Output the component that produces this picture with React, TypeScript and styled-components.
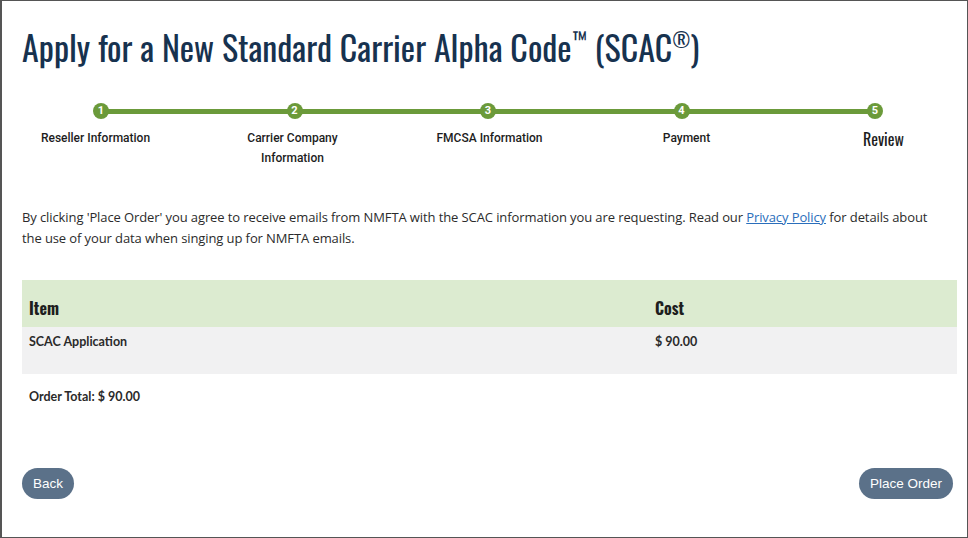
import React from "react";
import styled, { createGlobalStyle } from "styled-components";

const Global = createGlobalStyle`
  html, body { margin: 0; padding: 0; background: #fff; }
  * { box-sizing: border-box; }
`;

const condensed = `"Oswald", "Liberation Sans Narrow", "DejaVu Sans Condensed", sans-serif`;

const Frame = styled.div`
  width: 968px;
  height: 538px;
  border: 1px solid #555;
  border-left-width: 2px;
  background: #fff;
  padding: 0 10px 0 20px;
  display: flex;
  flex-direction: column;
  overflow: hidden;
`;

const Title = styled.h1`
  margin: 24px 0 0 0;
  font-family: ${condensed};
  font-weight: 400;
  font-size: 34px;
  line-height: 44px;
  color: #17324f;
  sup {
    font-size: 0.6em;
    vertical-align: 0.7em;
    line-height: 0;
  }
`;

const Stepper = styled.div`
  display: flex;
  flex-direction: column;
`;

const DotRow = styled.div`
  position: relative;
  margin: 34px 0 0 71px;
  width: 790px;
  display: flex;
  justify-content: space-between;
  &::before {
    content: "";
    position: absolute;
    left: 8px;
    right: 8px;
    top: 6px;
    height: 5px;
    background: #6b9a3a;
  }
`;

const Dot = styled.div`
  position: relative;
  width: 16px;
  height: 16px;
  border-radius: 50%;
  background: #6b9a3a;
  color: #fff;
  font-family: "Roboto", sans-serif;
  font-weight: 700;
  font-size: 11px;
  line-height: 16px;
  text-align: center;
`;

const LabelRow = styled.div`
  margin: 9px 0 0 -25px;
  display: grid;
  grid-template-columns: repeat(5, 197px);
`;

const StepLabel = styled.div<{ $active?: boolean }>`
  justify-self: center;
  width: 130px;
  margin-top: ${(p) => (p.$active ? "-1px" : "0")};
  text-align: center;
  font-family: ${(p) => (p.$active ? condensed : `"Roboto", sans-serif`)};
  font-weight: ${(p) => (p.$active ? 400 : 500)};
  font-size: ${(p) => (p.$active ? "16px" : "12px")};
  line-height: ${(p) => (p.$active ? "24px" : "20px")};
  color: #1d1d1d;
`;

const Notice = styled.p`
  margin: 39px 0 0 0;
  max-width: 912px;
  font-family: "Open Sans", "Noto Sans", sans-serif;
  font-size: 13px;
  letter-spacing: -0.1px;
  line-height: 21px;
  color: #2b2b2b;
  a {
    color: #2a6ebb;
    text-decoration: underline;
  }
`;

const Table = styled.div`
  margin-top: 31px;
  width: 935px;
  display: grid;
  grid-template-columns: 626px 1fr;
`;

const HeadCell = styled.div`
  background: #dcebd0;
  height: 47px;
  padding: 17px 7px 0;
  font-family: ${condensed};
  font-weight: 700;
  font-size: 16px;
  line-height: 22px;
  color: #1e1e1e;
`;

const BodyCell = styled.div`
  background: #f1f1f2;
  height: 47px;
  padding: 7px 7px 0;
  font-family: "Lato", "Open Sans", sans-serif;
  font-weight: 700;
  font-size: 12.5px;
  line-height: 16px;
  color: #2a2a2a;
`;

const Total = styled.div`
  margin: 15px 0 0 7px;
  font-family: "Lato", "Open Sans", sans-serif;
  font-weight: 700;
  font-size: 12.5px;
  line-height: 16px;
  color: #2a2a2a;
`;

const Actions = styled.div`
  margin-top: 63px;
  display: flex;
  justify-content: space-between;
  width: 931px;
`;

const Pill = styled.button`
  height: 31px;
  padding: 0 11px;
  border: none;
  border-radius: 16px;
  background: #5b7189;
  color: #fff;
  font-family: "Liberation Sans", Arial, sans-serif;
  font-size: 13.5px;
  cursor: pointer;
`;

const steps = [
  "Reseller Information",
  "Carrier Company Information",
  "FMCSA Information",
  "Payment",
  "Review",
];

export default function App() {
  return (
    <>
      <Global />
      <Frame>
        <Title>
          Apply for a New Standard Carrier Alpha Code<sup>™</sup> (SCAC<sup>®</sup>)
        </Title>
        <Stepper>
          <DotRow>
            {steps.map((s, i) => (
              <Dot key={s}>{i + 1}</Dot>
            ))}
          </DotRow>
          <LabelRow>
            {steps.map((s, i) => (
              <StepLabel key={s} $active={i === steps.length - 1}>
                {s}
              </StepLabel>
            ))}
          </LabelRow>
        </Stepper>
        <Notice>
          By clicking 'Place Order' you agree to receive emails from NMFTA with the SCAC
          information you are requesting. Read our <a href="#">Privacy Policy</a> for
          details about the use of your data when singing up for NMFTA emails.
        </Notice>
        <Table>
          <HeadCell>Item</HeadCell>
          <HeadCell>Cost</HeadCell>
          <BodyCell>SCAC Application</BodyCell>
          <BodyCell>$ 90.00</BodyCell>
        </Table>
        <Total>Order Total: $ 90.00</Total>
        <Actions>
          <Pill>Back</Pill>
          <Pill>Place Order</Pill>
        </Actions>
      </Frame>
    </>
  );
}
